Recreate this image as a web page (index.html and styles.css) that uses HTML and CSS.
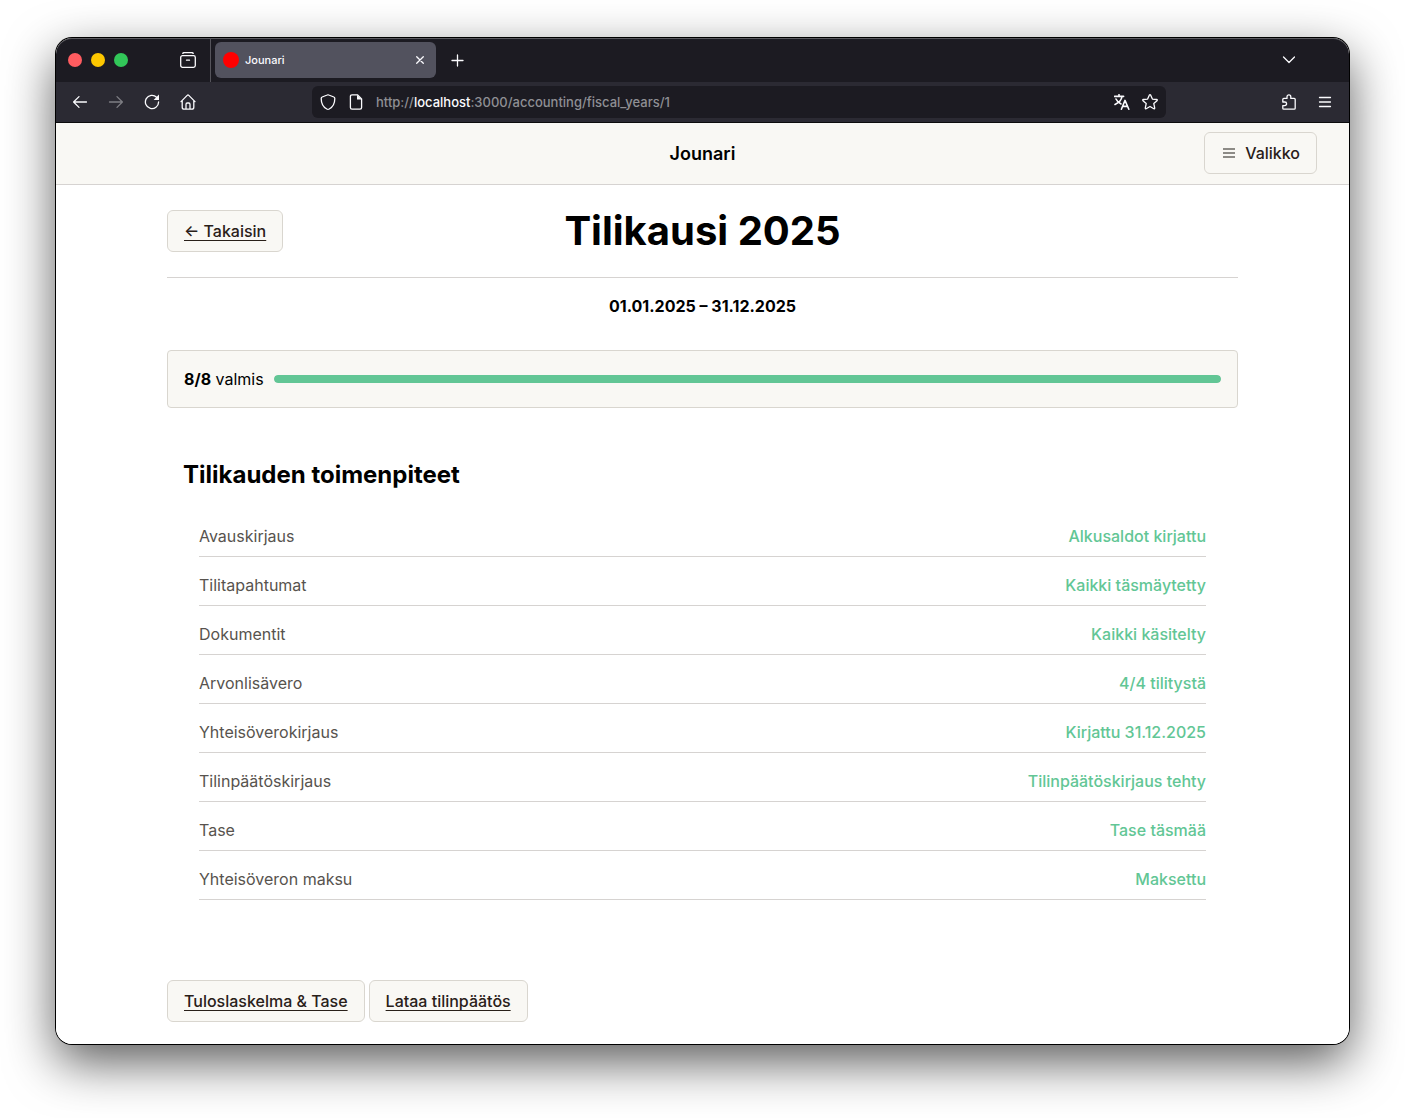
FILE: index.html
```html
<!DOCTYPE html>
<html lang="fi">
<head>
    <meta charset="UTF-8">
    <title>Jounari</title>
    <link rel="stylesheet" href="styles.css">
</head>
<body>
    <div class="window">
        <div class="tabbar">
            <div class="lights">
                <span class="light red"></span>
                <span class="light yellow"></span>
                <span class="light green"></span>
            </div>
            <button class="icon_btn" aria-label="Firefox View">
                <svg class="icon" viewBox="0 0 16 16"><path d="M2.8 1.4Q3.2.6 4.4.6h7.2q1.2 0 1.6.8"/><rect x=".7" y="3.7" width="14.6" height="11.6" rx="1.8"/><path d="M6.5 8.2h3"/></svg>
            </button>
            <div class="tabs">
                <div class="tab">
                    <span class="favicon"></span>
                    <span class="tab_title">Jounari</span>
                    <button class="tab_close" aria-label="Close tab">
                        <svg class="icon small" viewBox="0 0 12 12"><path d="M2.7 2.7l6.6 6.6M9.3 2.7L2.7 9.3"/></svg>
                    </button>
                </div>
                <button class="icon_btn" aria-label="New tab">
                    <svg class="icon" viewBox="0 0 16 16"><path d="M7.5 3v11M2 8.5h11"/></svg>
                </button>
            </div>
            <button class="icon_btn" aria-label="List all tabs">
                <svg class="icon" viewBox="0 0 16 16"><path d="M2.5 5L8 10.5 13.5 5"/></svg>
            </button>
        </div>
        <div class="toolbar">
            <button class="icon_btn" aria-label="Back">
                <svg class="icon" viewBox="0 0 16 16"><path d="M14.5 8H1.6M7 2.6L1.6 8 7 13.4"/></svg>
            </button>
            <button class="icon_btn" aria-label="Forward" disabled>
                <svg class="icon" viewBox="0 0 16 16"><path d="M1.5 8h12.9M9 2.6L14.4 8 9 13.4"/></svg>
            </button>
            <button class="icon_btn" aria-label="Reload">
                <svg class="icon" viewBox="0 0 16 16"><path d="M12.6 3.2A6.6 6.6 0 1 0 14.6 8"/><path class="solid" d="M15 .6V6H9.6z"/></svg>
            </button>
            <button class="icon_btn" aria-label="Home">
                <svg class="icon" viewBox="0 0 16 16"><path d="M1 7.6l6.2-6.2q.8-.8 1.6 0L15 7.6M2.2 6.6v6.6q0 2 2 2h7.6q2 0 2-2V6.6M6 15v-4.6Q6 9 7.2 9h1.6q1.2 0 1.2 1.4V15"/></svg>
            </button>
            <div class="urlbar">
                <svg class="icon" viewBox="0 0 16 16"><path d="M7.2 1q.8-.4 1.6 0l5 2q1 .4 1 1.4c0 4.6-1.8 8.4-5.6 10.6q-1.2.6-2.4 0C3 12.8 1.2 9 1.2 4.4q0-1 1-1.4z"/></svg>
                <svg class="icon" viewBox="0 0 16 16"><path d="M9.4.8H4Q2.4.8 2.4 2.4v11.2q0 1.6 1.6 1.6h8q1.6 0 1.6-1.6V5z"/><path class="solid" d="M9 1v4.6h4.6z"/></svg>
                <div class="url" role="textbox" aria-label="Address">http://<span class="host">localhost</span>:3000/accounting/fiscal_years/1</div>
                <button class="url_btn" aria-label="Translate page">
                    <svg class="icon thick" viewBox="0 0 16 16"><path d="M.6 2.4h9M5 .6v1.8M2 5c1.2 2.6 3 4 5 5M8 2.6C7.4 6 4.4 9 1 10.4"/><path d="M7.4 15.2L11 6.4l3.8 8.8M8.6 12.4h5"/></svg>
                </button>
                <button class="url_btn" aria-label="Bookmark this page">
                    <svg class="icon" viewBox="0 0 16 16"><path d="M7.3 1.2q.7-1 1.4 0l1.7 3.9 4.2.4q1.2.2.4 1.2l-3.2 2.9.9 4.3q.1 1.2-.9.8L8 12.5l-3.8 2.2q-1 .4-.9-.8l.9-4.3L1 6.7q-.8-1 .4-1.2l4.2-.4z"/></svg>
                </button>
            </div>
            <button class="icon_btn" aria-label="Extensions">
                <svg class="icon" viewBox="0 0 16 16"><path d="M1.8 8V5.4q0-1 1-1H6V2.8a1.9 1.9 0 0 1 3.8 0v1.6h3.4q1 0 1 1v8.8q0 1-1 1H2.8q-1 0-1-1v-2.6h2a1.8 1.8 0 0 0 0-3.6z"/></svg>
            </button>
            <button class="icon_btn" aria-label="Menu">
                <svg class="icon" viewBox="0 0 16 16"><path d="M2.5 3.5h11M2.5 8h11M2.5 12.5h11"/></svg>
            </button>
        </div>
        <div class="page">
            <header class="site_header">
                <strong class="brand">Jounari</strong>
                <button class="btn">
                    <svg class="burger" viewBox="0 0 12 10"><path d="M0 1h12M0 5h12M0 9h12"/></svg>
                    Valikko
                </button>
            </header>
            <main class="content">
                <div class="title_row">
                    <a class="btn" href="#">← Takaisin</a>
                    <h1 class="title">Tilikausi 2025</h1>
                </div>
                <p class="period">01.01.2025 – 31.12.2025</p>
                <div class="progress_box">
                    <span><b>8/8</b> valmis</span>
                    <div class="track"><div class="fill" style="width: 100%"></div></div>
                </div>
                <section class="tasks">
                    <h2 class="tasks_title">Tilikauden toimenpiteet</h2>
                    <dl class="task_list">
                        <div class="task"><dt>Avauskirjaus</dt><dd>Alkusaldot kirjattu</dd></div>
                        <div class="task"><dt>Tilitapahtumat</dt><dd>Kaikki täsmäytetty</dd></div>
                        <div class="task"><dt>Dokumentit</dt><dd>Kaikki käsitelty</dd></div>
                        <div class="task"><dt>Arvonlisävero</dt><dd>4/4 tilitystä</dd></div>
                        <div class="task"><dt>Yhteisöverokirjaus</dt><dd>Kirjattu 31.12.2025</dd></div>
                        <div class="task"><dt>Tilinpäätöskirjaus</dt><dd>Tilinpäätöskirjaus tehty</dd></div>
                        <div class="task"><dt>Tase</dt><dd>Tase täsmää</dd></div>
                        <div class="task"><dt>Yhteisöveron maksu</dt><dd>Maksettu</dd></div>
                    </dl>
                </section>
                <div class="actions">
                    <a class="btn" href="#">Tuloslaskelma &amp; Tase</a>
                    <a class="btn" href="#">Lataa tilinpäätös</a>
                </div>
            </main>
        </div>
    </div>
</body>
</html>
```

FILE: styles.css
```css
*{
    box-sizing: border-box;
}
body{
    margin: 0;
    padding: 38px 56px 74px;
    background-color: #fff;
    color: #000;
    font-family: Inter, "Liberation Sans", sans-serif;
    font-size: 16px;
    line-height: 24px;
}
button{
    font: inherit;
    color: inherit;
    cursor: pointer;
}
.window{
    border-radius: 16px;
    overflow: hidden;
    box-shadow: 0 0 0 1px #000, 0 18px 50px rgba(0,0,0,.65);
}

/* browser chrome */
.tabbar{
    display: flex;
    align-items: center;
    height: 44px;
    padding-left: 12px;
    padding-right: 42px;
    background-color: #1c1b22;
    box-shadow: inset 0 1px 0 #5c5b60;
    border-radius: 16px 16px 0 0;
    color: #fbfbfe;
}
.lights{
    display: flex;
    gap: 9px;
    margin-right: 42px;
}
.light{
    width: 14px;
    height: 14px;
    border-radius: 50%;
}
.red{
    background-color: #ff5c60;
}
.yellow{
    background-color: #fdc700;
}
.green{
    background-color: #32c759;
}
.icon_btn,
.url_btn,
.tab_close{
    display: flex;
    align-items: center;
    justify-content: center;
    padding: 0;
    border: none;
    background-color: transparent;
}
.icon_btn{
    width: 36px;
    height: 36px;
}
.icon_btn:disabled{
    opacity: .4;
}
.icon{
    width: 16px;
    height: 16px;
    flex: none;
    fill: none;
    stroke: #fbfbfe;
    stroke-width: 1.3;
    stroke-linecap: round;
    stroke-linejoin: round;
}
.icon.small{
    width: 12px;
    height: 12px;
}
.icon.thick{
    stroke-width: 1.6;
}
.solid{
    fill: #fbfbfe;
    stroke: none;
}
.tabs{
    display: flex;
    align-items: center;
    flex: 1;
    gap: 4px;
    height: 44px;
    margin-left: 4px;
    padding-left: 4px;
    border-left: 1px solid #55545b;
}
.tab{
    display: flex;
    align-items: center;
    width: 221px;
    height: 36px;
    padding: 0 8px;
    border-radius: 6px;
    background-color: #52525e;
    font-size: 11px;
    font-weight: 500;
}
.favicon{
    width: 16px;
    height: 16px;
    margin-right: 6px;
    border-radius: 50%;
    background-color: #f00;
}
.tab_title{
    flex: 1;
}
.tab_close{
    width: 16px;
    height: 16px;
}
.toolbar{
    display: flex;
    align-items: center;
    height: 41px;
    padding: 0 6px;
    border-bottom: 1px solid #0c0c0d;
    background-color: #2b2a33;
}
.urlbar{
    display: flex;
    align-items: center;
    flex: 1;
    gap: 12px;
    height: 32px;
    margin: 0 105px 0 106px;
    padding: 0 8px;
    border-radius: 6px;
    background-color: #1c1b22;
}
.url{
    flex: 1;
    color: #8f8f94;
    font-size: 13px;
    font-weight: 500;
}
.host{
    color: #fbfbfe;
}

/* page */
.page{
    background-color: #fff;
}
.site_header{
    display: grid;
    grid-template-columns: 1fr auto 1fr;
    align-items: center;
    padding: 9px 32px 10px;
    border-bottom: 1px solid #d6d3d1;
    background-color: #f9f8f4;
}
.brand{
    grid-column: 2;
    padding-top: 2px;
    font-size: 18px;
    font-weight: 600;
}
.site_header .btn{
    justify-self: end;
}
.btn{
    display: inline-flex;
    align-items: center;
    height: 42px;
    padding: 0 16px;
    border: 1px solid #d9d6cf;
    border-radius: 6px;
    background-color: #f9f8f4;
    color: #292019;
    font-weight: 500;
    white-space: nowrap;
    text-underline-offset: 3px;
}
.burger{
    width: 12px;
    height: 10px;
    margin: 0 10px 0 2px;
    stroke: #8d8b86;
    stroke-width: 2;
}
.content{
    max-width: 1071px;
    margin: 0 auto;
    padding: 25px 0 22px;
}
.title_row{
    display: grid;
    grid-template-columns: 1fr auto 1fr;
    align-items: center;
    padding-bottom: 25px;
    border-bottom: 1px solid #d6d3d1;
}
.title_row .btn{
    justify-self: start;
}
.title{
    margin: 0;
    font-size: 40px;
    font-weight: 700;
    line-height: 42px;
}
.period{
    margin: 16px 0 32px;
    font-weight: 700;
    text-align: center;
}
.progress_box{
    display: flex;
    align-items: center;
    gap: 10px;
    padding: 16px;
    border: 1px solid #d9d6cf;
    border-radius: 4px;
    background-color: #f9f8f4;
}
.track{
    flex: 1;
    height: 8px;
    border-radius: 4px;
    background-color: #e7e5e4;
    overflow: hidden;
}
.fill{
    height: 100%;
    border-radius: 4px;
    background-color: #62c695;
}
.tasks{
    padding: 51px 16px 80px;
}
.tasks_title{
    margin: 0 0 17px;
    font-size: 24px;
    font-weight: 700;
    line-height: 32px;
}
.task_list{
    margin: 0;
    padding: 0 16px;
}
.task{
    display: flex;
    justify-content: space-between;
    padding: 16px 0 8px;
    border-bottom: 1px solid #d6d3d1;
}
.task dt{
    color: #57534e;
}
.task dd{
    margin: 0;
    color: #62c695;
    font-weight: 500;
}
.actions{
    display: flex;
    flex-wrap: wrap;
    gap: 4px;
}
```
